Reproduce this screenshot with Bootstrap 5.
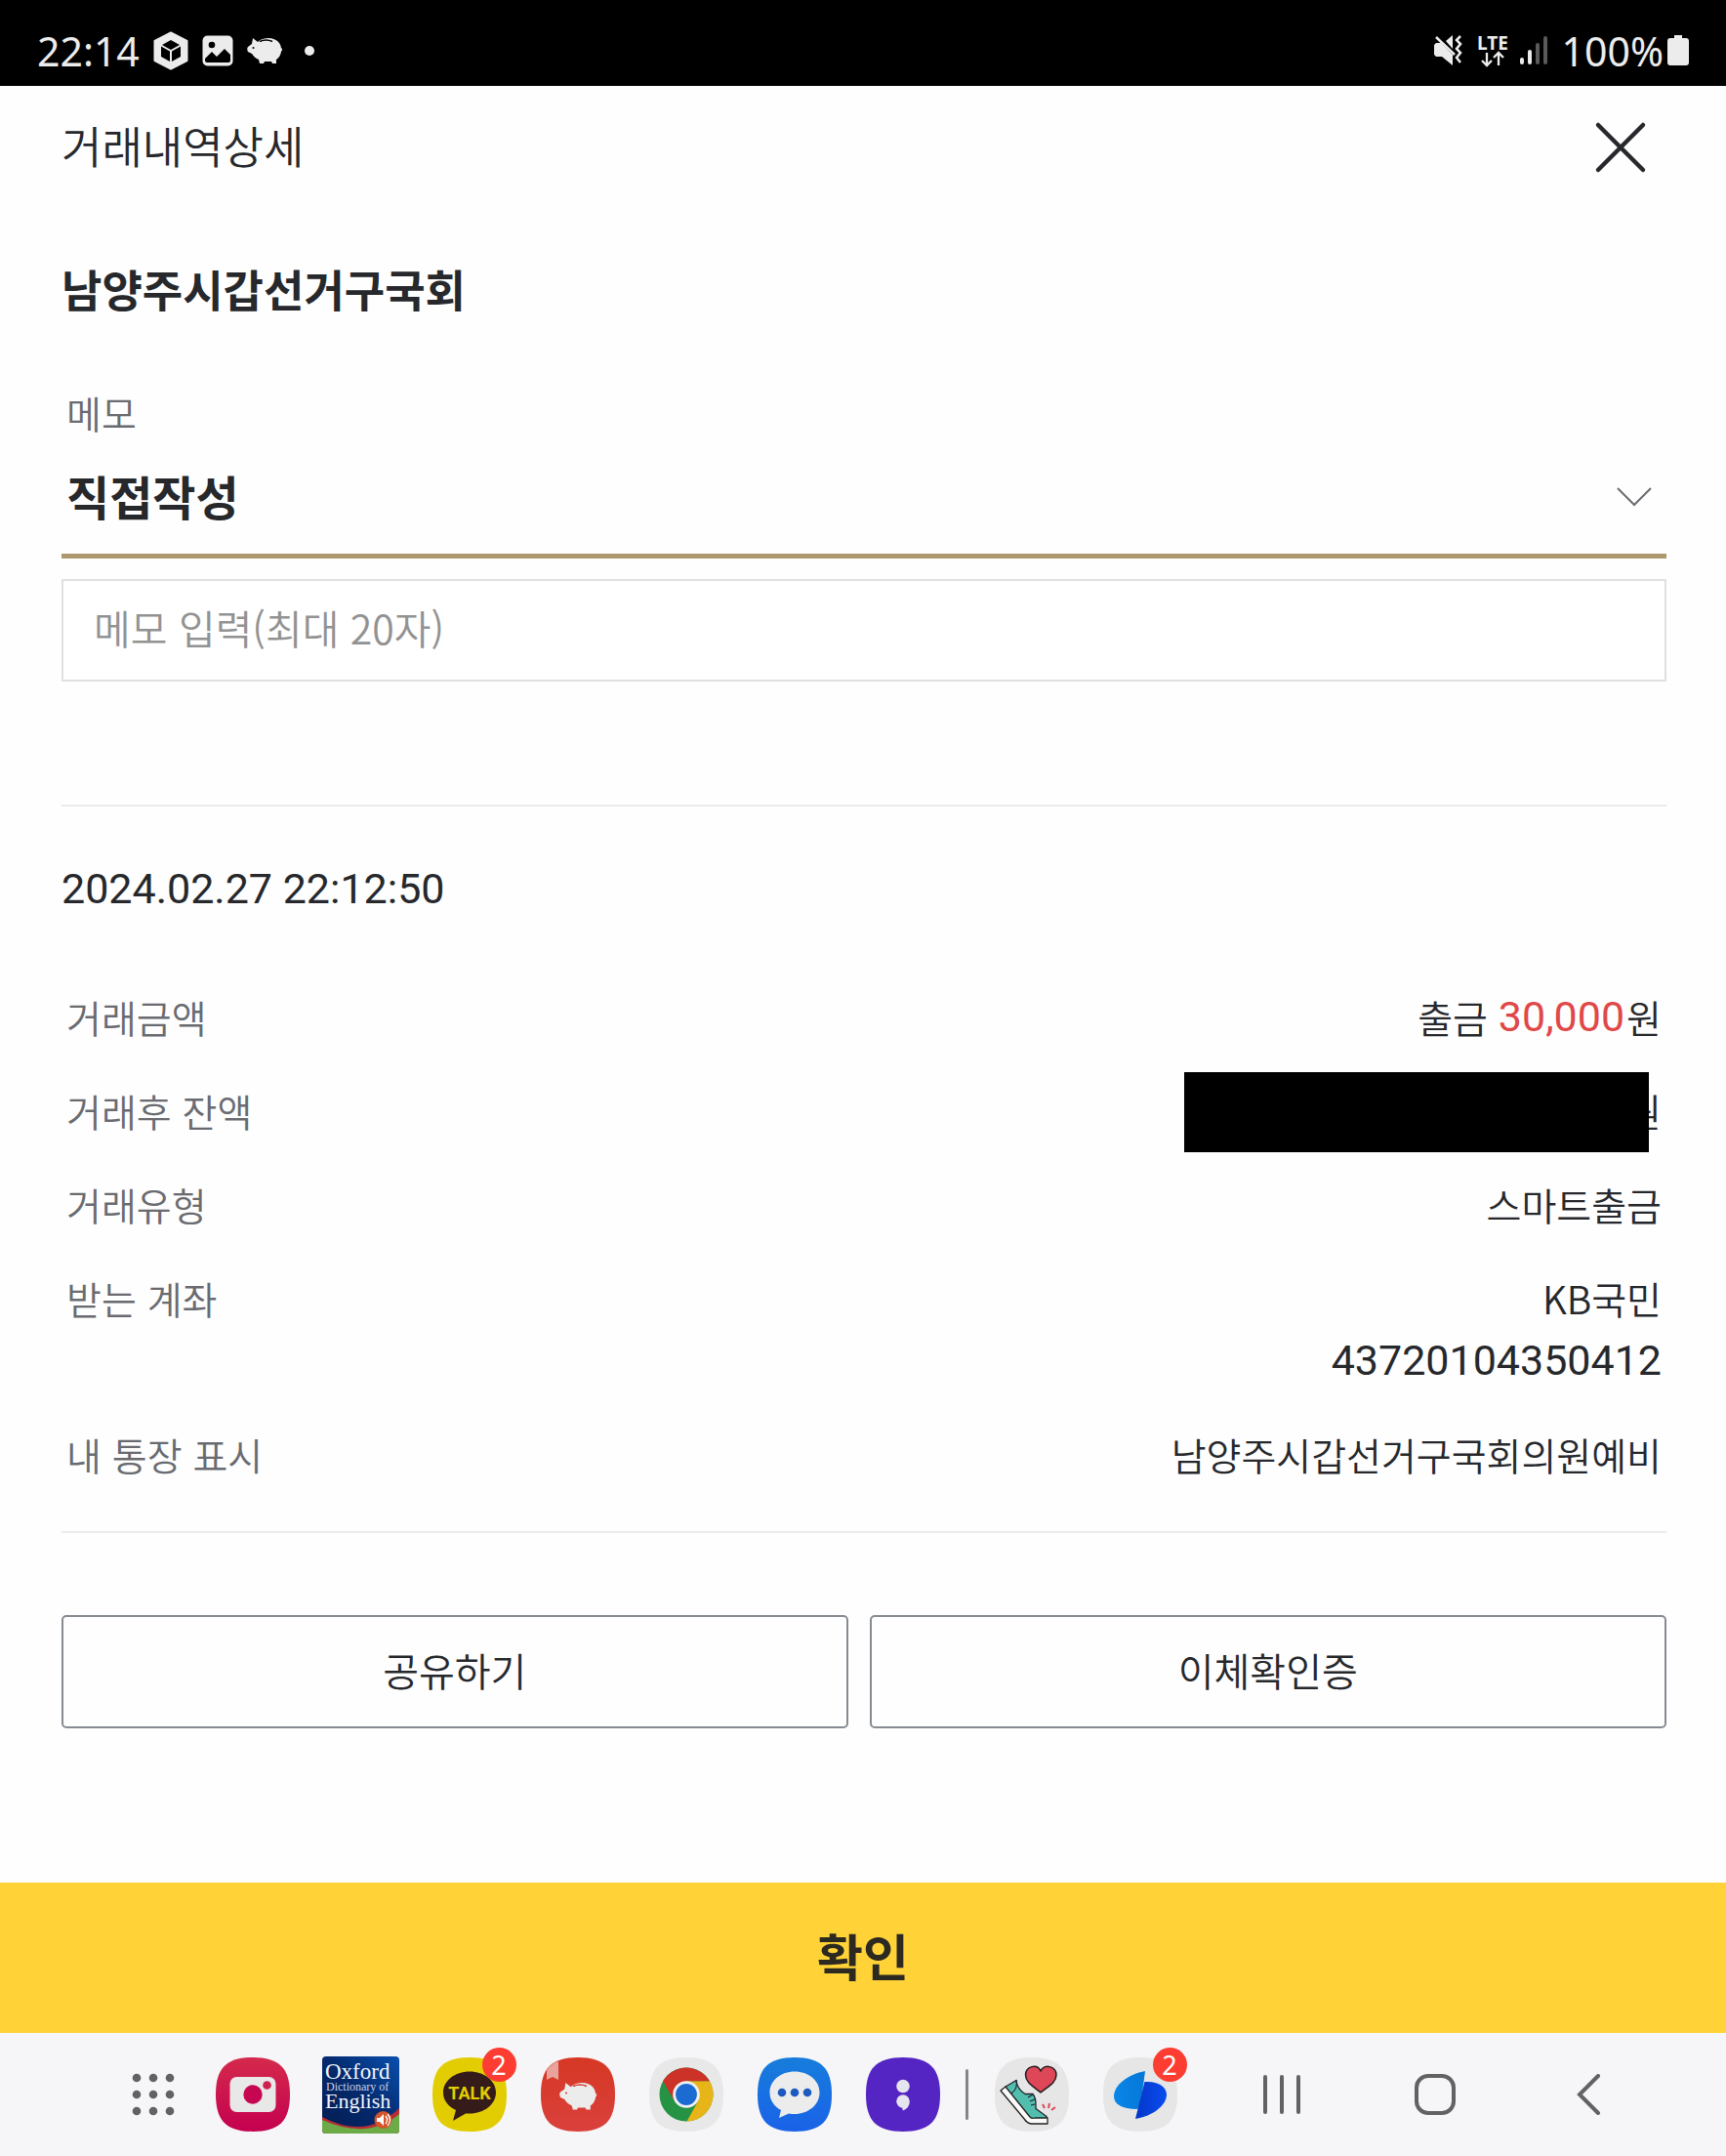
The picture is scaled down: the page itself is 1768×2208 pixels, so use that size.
<!DOCTYPE html>
<html lang="ko">
<head>
<meta charset="utf-8">
<meta name="viewport" content="width=device-width, initial-scale=1">
<title>거래내역상세</title>
<link href="https://cdn.jsdelivr.net/npm/bootstrap@5.3.0/dist/css/bootstrap.min.css" rel="stylesheet">
<style>
  body { font-family: "Noto Sans CJK KR", sans-serif; font-weight: 350; color: #26282c; background: #fefefe; }
  button, select, input { font-family: inherit; }
  .status-bar { height: 88px; padding: 15px 38px 0; background: #000; color: #ececec; font: 400 41px/70px "Noto Sans", sans-serif; }
  .status-icons { gap: 14px; }
  .gutter { padding-left: 63px; padding-right: 61px; }
  .page-head { height: 126px; }
  .page-title { font-size: 45px; font-weight: 350; line-height: 60px; }
  .btn-dismiss { margin-right: 16px; }
  .payee { font-size: 45px; font-weight: 700; line-height: 60px; margin-top: 52px; }
  .memo-label { font-size: 39px; line-height: 50px; margin: 71px 0 2px; padding-left: 5px; color: #696b70; }
  .memo-select { height: 123px; padding: 0 60px 2px 5px; border: 0; border-bottom: 5px solid #ad986f; border-radius: 0; font-size: 48px; font-weight: 700; color: #26282c;
    background: url("data:image/svg+xml,%3Csvg xmlns='http://www.w3.org/2000/svg' viewBox='0 0 36 20'%3E%3Cpath d='M1 1l17 17L35 1' fill='none' stroke='%23696b70' stroke-width='2'/%3E%3C/svg%3E") no-repeat right 15px top 50px / 36px 20px; }
  .memo-input { height: 105px; margin-top: 21px; padding: 0 31px 8px; border: 2px solid #dfe0e1; border-radius: 0; font-size: 41px; font-weight: 350; }
  .memo-input::placeholder { color: #929292; }
  .rule { height: 2px; background: #ececec; }
  .memo-block { padding-bottom: 126px; }
  .num { font-family: Roboto, sans-serif; font-size: 43px; font-weight: 400; }
  .stamp { line-height: 60px; margin-top: 54px; }
  .details { margin: 69px 0 47px; padding: 0 5px; gap: 32px; font-size: 39px; line-height: 64px; }
  .details dt { font-weight: 350; color: #696b70; }
  .details dd .num { display: inline-block; line-height: 64px; vertical-align: top; }
  .amount { color: #e04848; margin-right: 2px; }
  .redaction { position: absolute; right: 13px; top: -7px; width: 476px; height: 82px; background: #000; }
  .actions { margin-top: 84px; gap: 22px; }
  .actions .btn { height: 116px; padding-bottom: 10px; border: 2px solid #868b92; border-radius: 5px; font-size: 40px; font-weight: 350; color: #26282c; flex: 1 1 0; }
  .actions .btn:first-child { flex: 0 0 49%; }
  .btn-confirm { height: 154px; padding-bottom: 12px; border: 0; border-radius: 0; background: #ffd338; font-size: 51px; font-weight: 700; color: #2b2920; }
  .dock { height: 126px; padding: 0 63px 0 110px; background: #f6f6f8; }
  .dock > * { display: flex; align-items: center; justify-content: center; min-width: 0; padding: 0; border: 0; background: none; }
  .dock-all { flex: 93 1 0; }
  .dock-app { flex: 111 1 0; }
  .dock-line { flex: 21 1 0; }
  .dock-gap { flex: 11 1 0; }
  .dock-nav { flex: 157 1 0; }
  .dock-app > span { position: relative; display: block; }
  .dock svg, .status-bar svg, .btn-dismiss svg { display: block; }
  .count { position: absolute; left: 51px; top: -10px; width: 35px; height: 35px; border-radius: 50%; background: #fd3d31; color: #fff; font: 400 27px/35px "Noto Sans", sans-serif; text-align: center; }
</style>
</head>
<body>
<svg width="0" height="0" class="position-absolute" aria-hidden="true">
  <defs>
    <path id="squircle" d="M38 0C65 0 76 11 76 38S65 76 38 76 0 65 0 38 11 0 38 0Z"/>
    <g id="pig">
      <path d="M6 1l5 4c3-3 7-4 11-4 8 0 13 5 13 11l1-1v2l-1 2c-1 4-2 6-5 8v4h-4l-1-2h-7l-1 2h-4l-1-4c-3-1-5-3-7-6l-4-2c-1-2-1-4 0-5l4-3z"/>
    </g>
    <linearGradient id="gPink" x2="0" y2="1"><stop stop-color="#d42a4c"/><stop offset="1" stop-color="#c4004f"/></linearGradient>
    <linearGradient id="gBlue" x2="0" y2="1"><stop stop-color="#167ddb"/><stop offset="1" stop-color="#1a62e8"/></linearGradient>
    <linearGradient id="gRed" x2="0" y2="1"><stop stop-color="#d63824"/><stop offset="1" stop-color="#da403c"/></linearGradient>
    <linearGradient id="gNavy" x1="1" x2="0" y2="1"><stop stop-color="#0a4fae"/><stop offset=".5" stop-color="#04296c"/><stop offset="1" stop-color="#041c50"/></linearGradient>
    <linearGradient id="gSky"><stop stop-color="#0a86e8"/><stop offset="1" stop-color="#0578d8"/></linearGradient>
    <linearGradient id="gDeep" x1="1" x2="0"><stop stop-color="#0a4cf0"/><stop offset="1" stop-color="#0436c8"/></linearGradient>
  </defs>
</svg>
<div class="d-flex flex-column min-vh-100">
  <header class="status-bar d-flex align-items-center justify-content-between">
    <div class="status-icons d-flex align-items-center">
      <span>22:14</span>
      <svg width="36" height="40" viewBox="0 0 36 40"><path d="M18 1.500L34.500 10v20L18 38.500 1.500 30V10Z" fill="#ececec" stroke="#ececec" stroke-width="2" stroke-linejoin="round"/><path d="M18 9l9 5-9 5-9-5zM8 15.500l9 5V31l-9-5zM28 15.500l-9 5V31l9-5z" fill="#000"/></svg>
      <svg width="32" height="32" viewBox="0 0 32 32"><rect width="31" height="31" x=".5" y=".5" rx="5" fill="#ececec"/><circle cx="10" cy="10" r="3.300" fill="#000"/><path d="M3 24l7-7 5 5 8-8 6 6v6q0 2-2 2H5q-2 0-2-2z" fill="#000"/></svg>
      <svg width="37" height="28" viewBox="0 0 37 28"><use href="#pig" fill="#ececec"/><path d="M13 4.500q7-3 13 0" fill="none" stroke="#000" stroke-width="1.500"/><circle cx="6.500" cy="11" r="1" fill="#000"/></svg>
      <svg class="ms-2" width="10" height="10" viewBox="0 0 10 10"><circle cx="5" cy="5" r="5" fill="#ececec"/></svg>
    </div>
    <div class="status-icons d-flex align-items-center">
      <svg width="118" height="50" viewBox="0 -8 118 50" fill="#ececec">
        <path d="M1 11l2-2h5l12 12v11L9 23H3l-2-2zM13 7l7-6v14z"/><path d="M3 3l19 18" stroke="#ececec" stroke-width="2.500"/>
        <path d="M28 2l-4 4 4 4-4 5 4 4-4 5 4 5" fill="none" stroke="#ececec" stroke-width="2.500"/>
        <text x="45" y="16" font-family="Noto Sans" font-size="19" font-weight="700">LTE</text>
        <path d="M55 19v13m-5-5l5 5 5-5M67 32V19m-5 5l5-5 5 5" fill="none" stroke="#ececec" stroke-width="2.300"/>
        <rect x="89" y="24" width="4" height="7" rx="2"/><rect x="97" y="16" width="4" height="15" rx="2"/>
        <g fill="#5a5a5a"><rect x="105" y="9" width="4" height="22" rx="2"/><rect x="113" y="2" width="4" height="29" rx="2"/></g>
      </svg>
      <span class="d-flex align-items-center gap-1"><span>100%</span>
      <svg width="22" height="31" viewBox="0 0 22 31"><path d="M7 0h8v3h4q3 0 3 3v22q0 3-3 3H3q-3 0-3-3V6q0-3 3-3h4z" fill="#ececec"/></svg></span>
    </div>
  </header>

  <main class="flex-grow-1">
    <div class="page-head gutter d-flex align-items-center justify-content-between">
      <h1 class="page-title mb-1">거래내역상세</h1>
      <button type="button" class="btn btn-dismiss border-0 p-0" aria-label="닫기">
        <svg width="62" height="62" viewBox="0 0 62 62"><path d="M8 8l46 46M54 8L8 54" stroke="#26282c" stroke-width="4.500" stroke-linecap="round"/></svg>
      </button>
    </div>

    <div class="gutter">
      <h2 class="payee mb-0">남양주시갑선거구국회</h2>
      <div class="memo-block">
        <label class="memo-label d-block" for="memoType">메모</label>
        <select id="memoType" class="form-select memo-select"><option>직접작성</option></select>
        <input type="text" class="form-control memo-input" maxlength="20" placeholder="메모 입력(최대 20자)" aria-label="메모 입력">
      </div>
      <div class="rule"></div>
      <div class="num stamp">2024.02.27 22:12:50</div>

      <dl class="details d-flex flex-column">
        <div class="d-flex justify-content-between"><dt>거래금액</dt><dd class="mb-0">출금 <span class="num amount">30,000</span>원</dd></div>
        <div class="d-flex justify-content-between position-relative"><dt>거래후 잔액</dt><dd class="mb-0">원</dd><span class="redaction"></span></div>
        <div class="d-flex justify-content-between"><dt>거래유형</dt><dd class="mb-0">스마트출금</dd></div>
        <div class="d-flex justify-content-between"><dt>받는 계좌</dt><dd class="mb-0 text-end">KB국민<br><span class="num">43720104350412</span></dd></div>
        <div class="d-flex justify-content-between"><dt>내 통장 표시</dt><dd class="mb-0">남양주시갑선거구국회의원예비</dd></div>
      </dl>
      <div class="rule"></div>

      <div class="actions d-flex">
        <button type="button" class="btn">공유하기</button>
        <button type="button" class="btn">이체확인증</button>
      </div>
    </div>
  </main>

  <button type="button" class="btn btn-confirm w-100">확인</button>

  <nav class="dock d-flex align-items-stretch">
    <button type="button" class="dock-all" aria-label="모든 앱">
      <svg width="44" height="44" viewBox="0 0 44 44" fill="#626262"><circle cx="5" cy="5" r="4.300"/><circle cx="22" cy="5" r="4.300"/><circle cx="39" cy="5" r="4.300"/><circle cx="5" cy="22" r="4.300"/><circle cx="22" cy="22" r="4.300"/><circle cx="39" cy="22" r="4.300"/><circle cx="5" cy="39" r="4.300"/><circle cx="22" cy="39" r="4.300"/><circle cx="39" cy="39" r="4.300"/></svg>
    </button>
    <button type="button" class="dock-app" aria-label="카메라">
      <svg width="76" height="76" viewBox="0 0 76 76"><use href="#squircle" fill="url(#gPink)"/><rect x="14.500" y="20" width="47" height="36" rx="7" fill="#e8e8e8"/><circle cx="38" cy="38" r="9.700" fill="#c60650"/><circle cx="52.500" cy="28.500" r="4.300" fill="#d02050"/></svg>
    </button>
    <button type="button" class="dock-app" aria-label="Oxford Dictionary of English">
      <svg width="79" height="79" viewBox="0 0 79 79"><clipPath id="ox"><rect width="79" height="79" rx="4"/></clipPath>
        <g clip-path="url(#ox)"><rect width="79" height="79" fill="url(#gNavy)"/><path d="M0 62Q45 86 79 53v26H0z" fill="#b82c34"/><path d="M0 65Q47 86 79 59v20H0z" fill="#6cab48"/></g>
        <g fill="#f2f4fa" font-family="Liberation Serif"><text x="3" y="23" font-size="23">Oxford</text><text x="4" y="35" font-size="12" fill="#c8d0e4">Dictionary of</text><text x="3" y="53" font-size="22">English</text></g>
        <circle cx="62.500" cy="65" r="9" fill="#d4552a"/><path d="M56 63h3l4-4v12l-4-4h-3z" fill="#fff"/><path d="M65 61q3 4 0 8m2-10q5 6 0 12" fill="none" stroke="#fff" stroke-width="1.300"/></svg>
    </button>
    <button type="button" class="dock-app" aria-label="TALK">
      <span><svg width="76" height="76" viewBox="0 0 76 76"><use href="#squircle" fill="#e2cd02"/><path d="M38 14.500c15 0 27 9.500 27 21.500S53 57.500 38 57.500h-4L21 65l3-11C16 50 11 44 11 36c0-12 12-21.500 27-21.500z" fill="#351c1a"/><text x="38" y="43" text-anchor="middle" font-family="Roboto" font-size="18" font-weight="700" fill="#e2cd02">TALK</text></svg><span class="count">2</span></span>
    </button>
    <button type="button" class="dock-app" aria-label="저금통">
      <svg width="76" height="76" viewBox="0 0 76 76"><use href="#squircle" fill="url(#gRed)"/><path d="M6 13Q11 6 18 4v19l-6-3-6 3z" fill="#e8a49c"/><g transform="translate(19 25)"><use href="#pig" fill="#ececec" transform="scale(1.060)"/><path d="M14 4.500q7-3 14 0" fill="none" stroke="#d83a2c" stroke-width="1.600"/><circle cx="7" cy="11.500" r="1" fill="#d83a2c"/></g></svg>
    </button>
    <button type="button" class="dock-app" aria-label="Chrome">
      <svg width="76" height="76" viewBox="0 0 76 76"><use href="#squircle" fill="#e8e8e8"/><circle cx="38" cy="38" r="27.500" fill="#259244"/><path d="M38 24.200h23.800A27.500 27.500 0 0 1 38.500 65.500L50 45z" fill="#e8b518"/><path d="M14.200 24.200A27.500 27.500 0 0 1 61.800 24.200H38L26 45z" fill="#cc3227"/><circle cx="38" cy="38" r="13.800" fill="#f0f0f0"/><circle cx="38" cy="38" r="10.900" fill="#1b6bd2"/></svg>
    </button>
    <button type="button" class="dock-app" aria-label="메시지">
      <svg width="76" height="76" viewBox="0 0 76 76"><use href="#squircle" fill="url(#gBlue)"/><path d="M38 14.500c14 0 25.500 9 25.500 21.500S52 58 38 58q-3 0-6-.6L22 62l2-8c-7-4-11.500-10-11.500-18 0-12.500 11.500-21.500 25.500-21.500z" fill="#ececec"/><g fill="#1d5ac0"><circle cx="25" cy="36" r="4.300"/><circle cx="38" cy="36" r="4.300"/><circle cx="51" cy="36" r="4.300"/></g></svg>
    </button>
    <button type="button" class="dock-app" aria-label="메모 앱">
      <svg width="76" height="76" viewBox="0 0 76 76"><use href="#squircle" fill="#5425c2"/><g fill="#e6e4ee"><circle cx="38" cy="29.500" r="6.800"/><path d="M31.200 45a6.800 6.800 0 1 1 13.600 0q0 7-7 9.500l-.6-2.800a6.800 6.800 0 0 1-6-6.700z"/></g></svg>
    </button>
    <span class="dock-line"><svg width="3" height="52" viewBox="0 0 3 52"><rect width="3" height="52" rx="1.500" fill="#858585"/></svg></span>
    <button type="button" class="dock-app" aria-label="걷기">
      <svg width="76" height="76" viewBox="0 0 76 76" stroke-linejoin="round"><use href="#squircle" fill="#e6e6e6"/>
        <path d="M47 36C40 30 31.500 26 31.500 18c0-9 12-12 15.500-4 3.500-8 16-5 16 4 0 8-9 12-16 18z" fill="#dd4757" stroke="#221c20" stroke-width="1.500"/>
        <path d="M11 30L22 23.500q1 9 9 14l8 0q3 4 3 10l0 5 11 8v6l-21-1z" fill="#52bfae" stroke="#223" stroke-width="1.300"/>
        <path d="M6 34l5-4 25 31q2 2 5 1h13v6H38q-4 0-7-4z" fill="#fafafa" stroke="#222" stroke-width="1.300"/><path d="M22 23q2 9-5 14M34 41l5-3m-3 7l5-2m-4 6l4-1" fill="none" stroke="#223" stroke-width="1.200"/>
        <path d="M49 48l2 4M56 47l-1 5M62 51l-4 3" stroke="#dd4757" stroke-width="2"/></svg>
    </button>
    <button type="button" class="dock-app" aria-label="toss">
      <span><svg width="76" height="76" viewBox="0 0 76 76"><use href="#squircle" fill="#e6e6e6"/><path d="M43 14C26 17 11 28 11 40c0 8 9 13 23 13l4-1z" fill="url(#gSky)"/><path d="M42.500 25C56 24 65 30 65 38c0 11-14 22-32 25z" fill="url(#gDeep)"/></svg><span class="count">2</span></span>
    </button>
    <span class="dock-gap"></span>
    <button type="button" class="dock-nav" aria-label="최근 앱"><svg width="38" height="40" viewBox="0 0 38 40" fill="#626262"><rect width="4" height="40" rx="2"/><rect x="17" width="4" height="40" rx="2"/><rect x="34" width="4" height="40" rx="2"/></svg></button>
    <button type="button" class="dock-nav" aria-label="홈"><svg width="42" height="42" viewBox="0 0 42 42"><rect x="2" y="2" width="38" height="38" rx="12" fill="none" stroke="#626262" stroke-width="4"/></svg></button>
    <button type="button" class="dock-nav" aria-label="뒤로"><svg width="24" height="42" viewBox="0 0 24 42"><path d="M22 2L3 21l19 19" fill="none" stroke="#626262" stroke-width="4" stroke-linecap="round"/></svg></button>
  </nav>
</div>
<script src="https://cdn.jsdelivr.net/npm/bootstrap@5.3.0/dist/js/bootstrap.bundle.min.js"></script>
</body>
</html>
